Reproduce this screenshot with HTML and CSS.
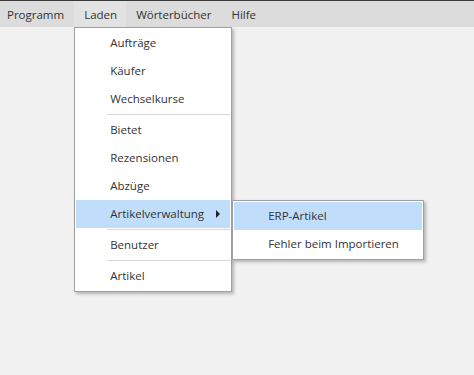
FILE: index.html
```html
<!DOCTYPE html>
<html lang="de">
<head>
    <meta charset="UTF-8">
    <title>Menü</title>
    <link rel="stylesheet" href="styles.css">
</head>
<body>
    <div class="menubar">
        <div class="menu-title first">Programm</div>
        <div class="menu-title open">Laden
            <div class="dropdown">
                <div class="item">Aufträge</div>
                <div class="item">Käufer</div>
                <div class="item">Wechselkurse</div>
                <div class="sep"></div>
                <div class="item">Bietet</div>
                <div class="item">Rezensionen</div>
                <div class="item">Abzüge</div>
                <div class="item active">Artikelverwaltung
                    <span class="arrow"></span>
                    <div class="dropdown sub">
                        <div class="item active">ERP-Artikel</div>
                        <div class="item">Fehler beim Importieren</div>
                    </div>
                </div>
                <div class="sep"></div>
                <div class="item">Benutzer</div>
                <div class="sep"></div>
                <div class="item">Artikel</div>
            </div>
        </div>
        <div class="menu-title">Wörterbücher</div>
        <div class="menu-title">Hilfe</div>
    </div>
</body>
</html>
```

FILE: styles.css
```css
body {
    margin: 0;
    height: 375px;
    background: #f1f1f1;
    font-family: "Open Sans", "Noto Sans", sans-serif;
    font-size: 11.5px;
    color: #333;
}
.menubar {
    display: flex;
    height: 26px;
    border-top: 1px solid #3a3a3a;
    background: #dcdcdc;
}
.menu-title {
    position: relative;
    display: flex;
    align-items: center;
    padding: 0 10px;
}
.menu-title.first {
    padding-left: 7px;
}
.menu-title.open {
    padding-right: 9px;
    background: #e2e2e2;
}
.dropdown {
    position: absolute;
    top: 26px;
    left: 0;
    width: 154px;
    padding: 1px;
    background: #fff;
    border: 1px solid #a0a0a0;
    box-shadow: 2px 2px 3px rgba(0, 0, 0, 0.25);
}
.item {
    position: relative;
    display: flex;
    align-items: center;
    height: 27px;
    padding-bottom: 1px;
    padding-left: 34px;
}
.item.active {
    background: #c0defc;
}
.sep {
    height: 1px;
    margin: 1px 0 1px 31px;
    background: #d7d7d7;
}
.arrow {
    position: absolute;
    left: 140px;
    top: 10px;
    width: 0;
    height: 0;
    border-top: 4px solid transparent;
    border-bottom: 4px solid transparent;
    border-left: 4px solid #222;
}
.dropdown.sub {
    top: 0;
    left: calc(100% + 2px);
    width: 188px;
}
```
